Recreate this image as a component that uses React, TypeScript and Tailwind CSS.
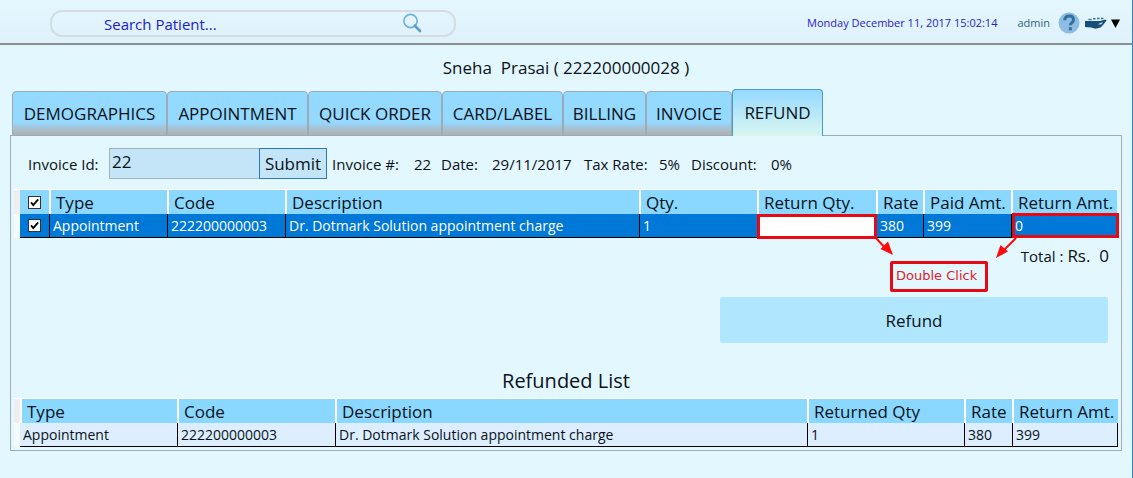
import React, { useState } from "react";

const tabs = [
  { name: "DEMOGRAPHICS", width: "w-[155px]" },
  { name: "APPOINTMENT", width: "w-[141px]" },
  { name: "QUICK ORDER", width: "w-[134px]" },
  { name: "CARD/LABEL", width: "w-[121px]" },
  { name: "BILLING", width: "w-[83px]" },
  { name: "INVOICE", width: "w-[86px]" },
  { name: "REFUND", width: "w-[91px]" },
];

const headCell =
  "h-6 border-l-2 border-white bg-[#8ad8ff] pt-[2px] pr-0 pl-[5px] text-left text-[17px] leading-[22px] font-normal whitespace-nowrap";
const rowCell =
  "h-6 border-l border-b border-black px-[3px] text-left text-[14px] leading-[23px] align-top whitespace-nowrap";
const listCell = "border-b border-l border-black px-[3px] pt-px text-[14px] leading-[22px] whitespace-nowrap";

function TickBox({ label }: { label: string }) {
  const [checked, setChecked] = useState(true);
  return (
    <span className="relative mx-auto block h-[13px] w-[13px]">
      <input
        type="checkbox"
        aria-label={label}
        checked={checked}
        onChange={(e) => setChecked(e.target.checked)}
        className="block h-[13px] w-[13px] appearance-none border border-[#333] bg-white"
      />
      {checked && (
        <svg viewBox="0 0 13 13" className="pointer-events-none absolute inset-0 h-[13px] w-[13px]">
          <path d="M3 6.3 L5.3 9 L10.2 3.4" fill="none" stroke="#000" strokeWidth="1.8" />
        </svg>
      )}
    </span>
  );
}

function Header() {
  return (
    <header className="flex h-[45px] items-center border-b-2 border-[#8b908f] bg-linear-to-b from-[#e4f7ff] to-[#dff1fa] pt-[3px] pr-3 pl-[50px]">
      <div className="flex h-[27px] w-[406px] items-center rounded-[12px] border-2 border-[#d5dde3] pr-8 pl-[52px]">
        <input
          type="text"
          aria-label="Search Patient"
          placeholder="Search Patient..."
          className="min-w-0 flex-1 bg-transparent pt-px text-[15px] leading-5 outline-none placeholder:text-[#2020d0] placeholder:opacity-100"
        />
        <svg viewBox="0 0 20 20" className="h-5 w-5" fill="none">
          <circle cx="8.5" cy="8" r="6.6" stroke="#6fb0da" strokeWidth="1.6" />
          <path d="M12.8 12.6 L18 18" stroke="#5a9cce" strokeWidth="2.6" strokeLinecap="round" />
        </svg>
      </div>
      <div className="ml-auto flex items-center">
        <time className="mr-5 text-[11px] leading-5 text-[#2a20cc]">Monday December 11, 2017 15:02:14</time>
        <span className="mr-2 text-[11px] leading-5 text-[#2f6478]">admin</span>
        <button aria-label="Help" className="mr-1">
          <svg viewBox="0 0 22 22" className="h-[22px] w-[22px]">
            <circle cx="11" cy="11" r="10.5" fill="#8ebde4" />
            <path
              d="M6.8 8.2 C6.8 5.3 8.6 3.9 11.2 3.9 C13.8 3.9 15.5 5.4 15.5 7.7 C15.5 10.5 12.4 10.5 12.3 13.3 M12.3 15.2 V18.2"
              fill="none"
              stroke="#35719f"
              strokeWidth="3"
            />
          </svg>
        </button>
        <button aria-label="Account" className="flex items-center gap-1">
          <svg viewBox="0 0 23 14" className="h-[14px] w-[23px]">
            <path
              d="M1 5 H16 L21.5 3.4 L22.5 4.6 L19.5 8.4 L16.5 11.5 L11.5 12.8 L7 11.4 L1 11 Z"
              fill="#174f78"
            />
            <path d="M4.500 3.500 H7.500 M9 2.800 H11.500 M13 2.500 H15.500 M17 2.500 H19.500" stroke="#34719b" strokeWidth="1.6" />
            <path d="M15 7.400 L19 6 L17.500 8.200 L14.500 8.800 Z" fill="#b9dcec" />
          </svg>
          <svg viewBox="0 0 9 9" className="h-[9px] w-[9px]">
            <path d="M0 0.5 H9 L4.5 9 Z" fill="#000" />
          </svg>
        </button>
      </div>
    </header>
  );
}

function Tabs() {
  return (
    <nav role="tablist" className="relative z-10 -mb-px flex items-end pl-[2px]">
      {tabs.map((tab) =>
        tab.name === "REFUND" ? (
          <button
            key={tab.name}
            role="tab"
            aria-selected
            className={`${tab.width} h-[47px] rounded-t-[4px] border border-b-0 border-[#4a9cc0] bg-linear-to-b from-[#94d9ff] to-[#d9f6f0] text-[17px] leading-6 whitespace-nowrap`}
          >
            {tab.name}
          </button>
        ) : (
          <button
            key={tab.name}
            role="tab"
            aria-selected={false}
            className={`${tab.width} h-[45px] rounded-t-[4px] border border-[#9eaab3] bg-linear-to-b from-[#94d9ff] from-70% to-[#adb3b8] to-95% text-[17px] leading-6 whitespace-nowrap`}
          >
            {tab.name}
          </button>
        )
      )}
    </nav>
  );
}

function Annotation() {
  return (
    <div className="pointer-events-none absolute top-[24px] -right-[2px] h-[80px] w-[363px]">
      <svg viewBox="0 0 363 80" className="absolute inset-0 h-[80px] w-[363px]" fill="none">
        <rect x="2.5" y="2.5" width="117" height="22" stroke="#e60a14" strokeWidth="3" />
        <rect x="257.5" y="1.5" width="104" height="22" stroke="#e60a14" strokeWidth="3" />
        <path d="M120 25 L130 36" stroke="#ff0a0a" strokeWidth="2" />
        <path d="M137 42 L124.5 36 L132 28.5 Z" fill="#ff0a0a" />
        <path d="M260 25 L247 38" stroke="#ff0a0a" strokeWidth="2" />
        <path d="M240 45 L244.5 32 L252 38.5 Z" fill="#ff0a0a" />
      </svg>
      <div className="absolute top-[48px] left-[134px] h-[31px] w-[98px] rounded-[2px] border-3 border-[#e60a14] pl-[3px] font-['DejaVu_Sans',sans-serif] text-[13px] leading-6 whitespace-nowrap text-[#e01c28]">
        Double Click
      </div>
    </div>
  );
}

function InvoiceTable() {
  return (
    <div className="relative mt-[10px] mr-1 ml-[3px]">
      <table className="w-full table-fixed border-separate border-spacing-0 border-t border-white">
        <colgroup>
          <col className="w-[6px]" />
          <col className="w-[29px]" />
          <col className="w-[118px]" />
          <col className="w-[118px]" />
          <col />
          <col className="w-[118px]" />
          <col className="w-[119px]" />
          <col className="w-[47px]" />
          <col className="w-[88px]" />
          <col className="w-[106px]" />
        </colgroup>
        <thead>
          <tr>
            <td className="bg-[#efefef] p-0" />
            <th className="h-6 bg-[#8ad8ff] p-0">
              <TickBox label="Select all" />
            </th>
            <th className={headCell}>Type</th>
            <th className={headCell}>Code</th>
            <th className={headCell}>Description</th>
            <th className={headCell}>Qty.</th>
            <th className={headCell}>Return Qty.</th>
            <th className={headCell}>Rate</th>
            <th className={headCell}>Paid Amt.</th>
            <th className={headCell}>Return Amt.</th>
          </tr>
        </thead>
        <tbody className="bg-[#0078d7] text-white">
          <tr>
            <td className="bg-[#f2fafe] p-0" />
            <td className="h-6 border-b border-black p-0">
              <TickBox label="Select appointment" />
            </td>
            <td className={rowCell}>Appointment</td>
            <td className={rowCell}>222200000003</td>
            <td className={rowCell}>Dr. Dotmark Solution appointment charge</td>
            <td className={rowCell}>1</td>
            <td className="h-6 p-0">
              <input
                aria-label="Return quantity"
                className="block h-6 w-full bg-white px-1 text-[14px] text-black outline-none"
              />
            </td>
            <td className={rowCell}>380</td>
            <td className={rowCell}>399</td>
            <td className={rowCell}>0</td>
          </tr>
        </tbody>
      </table>
      <Annotation />
    </div>
  );
}

function RefundedTable() {
  return (
    <table className="w-full table-fixed border-separate border-spacing-0 border-t border-white">
      <colgroup>
        <col className="w-[6px]" />
        <col className="w-[157px]" />
        <col className="w-[158px]" />
        <col />
        <col className="w-[157px]" />
        <col className="w-[48px]" />
        <col className="w-[106px]" />
      </colgroup>
      <thead>
        <tr>
          <td className="bg-[#efefef] p-0" />
          <th className={headCell}>Type</th>
          <th className={headCell}>Code</th>
          <th className={headCell}>Description</th>
          <th className={headCell}>Returned Qty</th>
          <th className={headCell}>Rate</th>
          <th className={headCell}>Return Amt.</th>
        </tr>
      </thead>
      <tbody className="bg-[#dceeff]">
        <tr>
          <td className="bg-[#f2fafe] p-0" />
          <td className="border-b border-black px-[3px] pt-px text-[14px] leading-[22px]">Appointment</td>
          <td className={listCell}>222200000003</td>
          <td className={listCell}>Dr. Dotmark Solution appointment charge</td>
          <td className={listCell}>1</td>
          <td className={listCell}>380</td>
          <td className={`${listCell} border-r`}>399</td>
        </tr>
      </tbody>
    </table>
  );
}

export default function App() {
  return (
    <div className="min-h-screen border-r border-[#2a86c8] bg-[#e3f7ff] font-['Open_Sans','Noto_Sans',sans-serif] text-[#0a1218]">
      <Header />
      <main className="pr-[10px] pl-[10px]">
        <h1 className="h-11 pt-[11px] text-center text-[17px] leading-6 whitespace-pre">Sneha  Prasai ( 222200000028 )</h1>
        <Tabs />
        <section className="border border-[#a0aab8] pb-[3px]">
          <div className="flex items-center pt-3 pl-[17px] text-[15px] leading-6 whitespace-nowrap">
            <label htmlFor="invoice-id" className="w-[81px]">
              Invoice Id:
            </label>
            <input
              id="invoice-id"
              defaultValue="22"
              className="h-[31px] w-[150px] border border-r-0 border-[#9fb4c0] bg-[#c4e5f7] px-[2px] pb-1 text-[17px] outline-none"
            />
            <button className="h-[31px] w-[68px] border border-[#2a7ab8] bg-[#c4e5f7] text-[17px]">Submit</button>
            <dl className="flex pl-[5px]">
              <dt className="w-[82px]">Invoice #:</dt>
              <dd className="w-[27px]">22</dd>
              <dt className="w-[51px]">Date:</dt>
              <dd className="w-[92px]">29/11/2017</dd>
              <dt className="w-[75px]">Tax Rate:</dt>
              <dd className="w-8">5%</dd>
              <dt className="w-[80px]">Discount:</dt>
              <dd>0%</dd>
            </dl>
          </div>
          <InvoiceTable />
          <p className="flex h-[59px] items-start justify-end gap-1 pt-[6px] pr-3 leading-6">
            <span className="text-[15px]">Total :</span>
            <span className="text-[17px] whitespace-pre">Rs.  0</span>
          </p>
          <div className="flex justify-end pr-[13px]">
            <button className="h-[46px] w-[388px] rounded-[2px] bg-[#b0e7ff] pt-[2px] text-[17px]">Refund</button>
          </div>
          <h2 className="pt-[23px] pb-[2px] text-center text-[20px] leading-[30px]">Refunded List</h2>
          <div className="mr-[3px] ml-[3px]">
            <RefundedTable />
          </div>
        </section>
      </main>
    </div>
  );
}
